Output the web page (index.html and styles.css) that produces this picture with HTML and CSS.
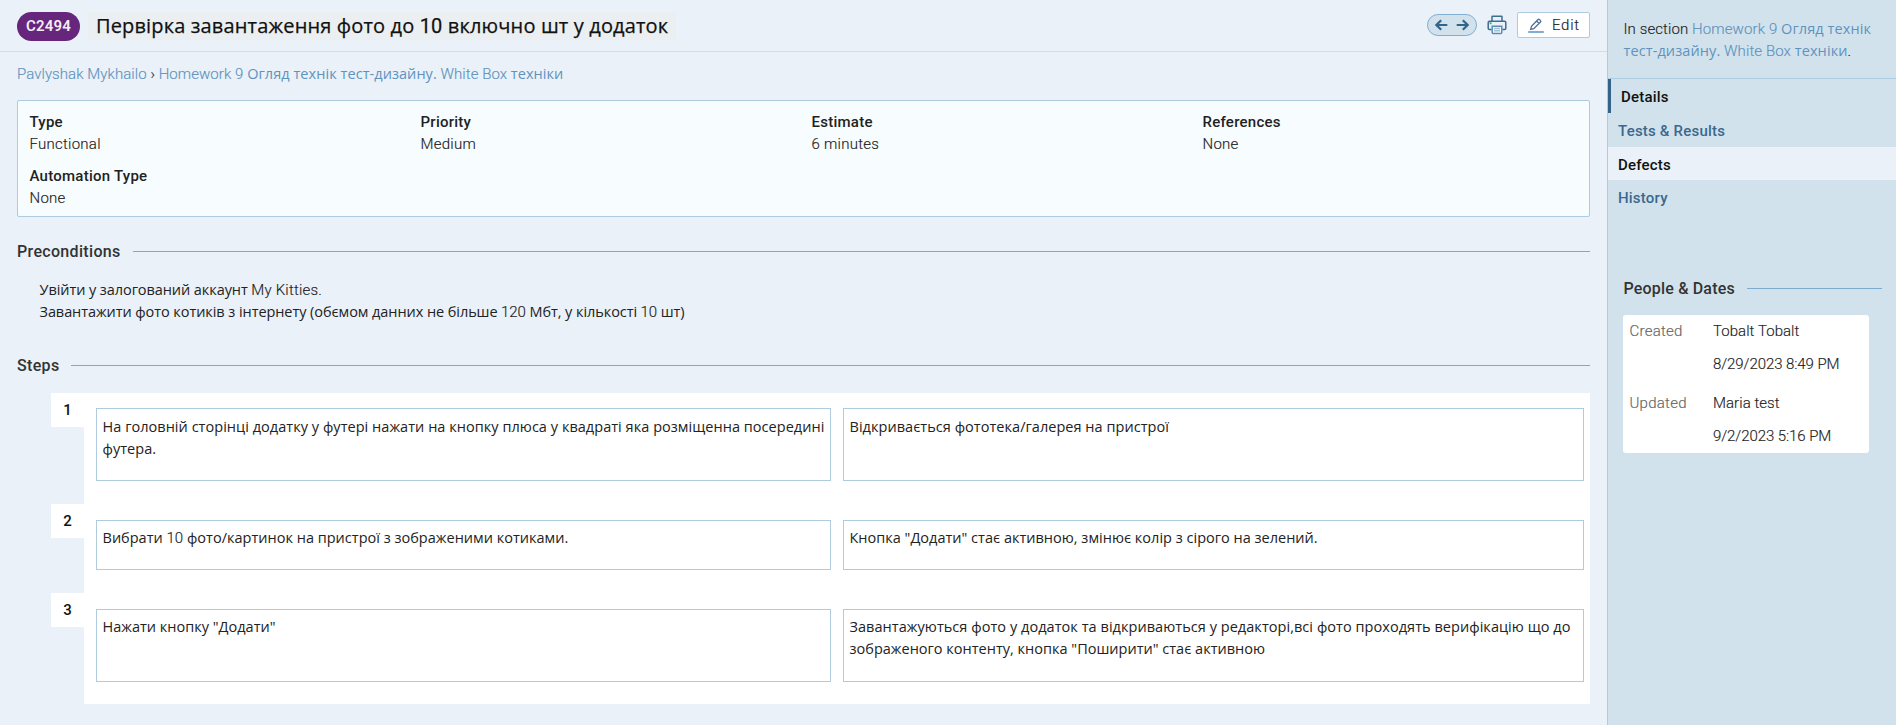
FILE: index.html
```
<!DOCTYPE html>
<html lang="uk">
<head>
<meta charset="utf-8">
<title>C2494</title>
<link rel="stylesheet" href="styles.css">
</head>
<body>
<div class="app">
  <main class="main">
    <header class="header">
      <span class="badge">C2494</span>
      <h1 class="title">Первірка завантаження фото до <span class="title-num">10</span> включно шт у додаток</h1>
      <div class="toolbar">
        <div class="pager">
          <svg width="13" height="12" viewBox="0 0 13 12"><path d="M12.3 6H1.6M6.2 1.2L1.4 6l4.8 4.8"/></svg>
          <svg width="13" height="12" viewBox="0 0 13 12"><path d="M.7 6h10.7M6.8 1.2L11.6 6l-4.8 4.8"/></svg>
        </div>
        <svg class="printer" width="20" height="20" viewBox="0 0 20 20">
          <path class="printer-body" d="M5 6V1.8Q5 1.2 5.6 1.2h8.8q.6 0 .6.6V6M4.6 14.4H2.4Q1.2 14.4 1.2 13.2V7.4Q1.2 6.2 2.4 6.2h15.2q1.2 0 1.2 1.2v5.8q0 1.2-1.2 1.2h-2.2"/>
          <path class="printer-page" d="M5.2 11.2h9.6v6.4q0 1-1 1H6.2q-1 0-1-1z"/>
          <path class="printer-lines" d="M7 13.5h6M7 15.7h6"/>
          <rect class="printer-led" x="2.7" y="7.4" width="1.8" height="1.8"/>
        </svg>
        <button class="edit">
          <svg width="16" height="16" viewBox="0 0 16 16"><path class="pencil" d="M2.7 11.4l.8-3.1L10 1.5q.7-.7 1.4 0l1.1 1.1q.7.7 0 1.4L5.8 10.6zM8.6 3l2.5 2.5"/><path class="pencil-line" d="M.8 14h14.4"/></svg>
          <span>Edit</span>
        </button>
      </div>
    </header>
    <nav class="crumbs"><a class="crumb-name">Pavlyshak Mykhailo</a> <span class="sep">›</span> <a>Homework 9 <span class="cy">Огляд технік тест-дизайну.</span> White Box <span class="cy">техніки</span></a></nav>

    <section class="meta">
      <div><b>Type</b><p>Functional</p></div>
      <div><b>Priority</b><p>Medium</p></div>
      <div><b>Estimate</b><p>6 minutes</p></div>
      <div><b>References</b><p>None</p></div>
      <div><b>Automation Type</b><p>None</p></div>
    </section>

    <h2 class="heading heading-pre">Preconditions</h2>
    <div class="pre">
      <p><span class="cy">Увійти у залогований аккаунт</span> <span class="kitties">My Kitties.</span></p>
      <p><span class="cy">Завантажити фото котиків з інтернету (обємом данних не більше</span> 120 <span class="cy">Мбт, у кількості</span> 10 <span class="cy">шт)</span></p>
    </div>

    <h2 class="heading heading-steps">Steps</h2>
    <div class="steps">
      <div class="step step-tall">
        <div class="num">1</div>
        <div class="cells">
          <div class="cell">На головній сторінці додатку у футері нажати на кнопку плюса у квадраті яка розміщенна посередині футера.</div>
          <div class="cell">Відкривається фототека/галерея на пристрої</div>
        </div>
      </div>
      <div class="step step-short">
        <div class="num">2</div>
        <div class="cells">
          <div class="cell">Вибрати <span class="lat">10</span> фото/картинок на пристрої з зображеними котиками.</div>
          <div class="cell">Кнопка "Додати" стає активною, змінює колір з сірого на зелений.</div>
        </div>
      </div>
      <div class="step step-tall step-last">
        <div class="num">3</div>
        <div class="cells">
          <div class="cell">Нажати кнопку "Додати"</div>
          <div class="cell"><span class="wide">Завантажуються фото у додаток та відкриваються у редакторі,всі фото проходять верифікацію що до</span> зображеного контенту, кнопка "Поширити" стає активною</div>
        </div>
      </div>
    </div>
  </main>

  <aside class="side">
    <p class="section">In section <a>Homework 9 <span class="cy">Огляд технік<br>тест-дизайну.</span> White Box <span class="cy">техніки</span></a>.</p>
    <nav class="tabs">
      <a class="tab current">Details</a>
      <a class="tab">Tests &amp; Results</a>
      <a class="tab hover">Defects</a>
      <a class="tab">History</a>
    </nav>
    <h2 class="heading heading-people">People &amp; Dates</h2>
    <dl class="people">
      <dt>Created</dt><dd>Tobalt Tobalt</dd><dd class="date">8/29/2023 8:49 PM</dd>
      <dt class="second">Updated</dt><dd class="second">Maria test</dd><dd class="date">9/2/2023 5:16 PM</dd>
    </dl>
  </aside>
</div>
</body>
</html>
```

FILE: styles.css
```
* { box-sizing: border-box; }
body, h1, h2, p, dl, dd, dt { margin: 0; }
body {
  background: #eaf1f8;
  color: #222;
  font: 300 15px/22px Roboto, "Open Sans", sans-serif;
  -webkit-text-stroke: .15px currentColor;
}
a { color: #5f93be; }
.app { display: flex; height: 725px; overflow: hidden; }
.main { width: 1607px; flex: none; }
.cy { font-family: "Open Sans", sans-serif; font-size: 14.5px; font-weight: 400; line-height: 1; -webkit-text-stroke: 0; }
.lat { font-family: Roboto, sans-serif; font-size: 15px; font-weight: 300; line-height: 1; -webkit-text-stroke: .15px currentColor; }

.header {
  display: flex;
  align-items: center;
  height: 52px;
  padding: 0 17px;
  border-bottom: 1px solid #cfdfea;
}
.badge {
  width: 63px;
  height: 29px;
  margin-top: 1px;
  border-radius: 15px;
  background: #66267c;
  color: #f3eef6;
  font-size: 15px;
  font-weight: 600;
  line-height: 29px;
  letter-spacing: .2px;
  text-align: center;
  -webkit-text-stroke: 0;
}
.title {
  height: 28px;
  margin: 0 0 0 8px;
  padding: 0 8px;
  background: #ebeff2;
  color: #111;
  font: 500 20px/28px "Open Sans", sans-serif;
  letter-spacing: .15px;
  -webkit-text-stroke: .25px #111;
}
.title-num { font-family: Roboto, sans-serif; font-weight: 400; line-height: 1; }
.toolbar { display: flex; align-items: center; height: 26px; margin: 0 0 2px auto; }
.pager {
  display: flex;
  align-items: center;
  justify-content: space-between;
  width: 50px;
  height: 22px;
  padding: 0 7px;
  border: 1px solid #7fb0d3;
  border-radius: 11px;
  background: #d2e2ec;
}
.pager svg { fill: none; stroke: #33658a; stroke-width: 2.2; }
.printer { margin: 0 10px; fill: none; stroke: #3d6d91; stroke-width: 1.5; }
.printer-page { fill: #f4f8fc; stroke: #5b8db3; }
.printer-lines { stroke: #9dbfda; stroke-width: 1.5; }
.printer-led { fill: #1fa37c; stroke: none; }
.edit {
  display: flex;
  align-items: center;
  gap: 8px;
  width: 73px;
  height: 26px;
  padding: 0 0 0 10px;
  border: 1px solid #aecbe0;
  border-radius: 2px;
  background: #fff;
  color: #222;
  font: 300 15px/22px Roboto, sans-serif;
  letter-spacing: .7px;
}
.edit svg { fill: none; margin-top: 2px; }
.pencil { stroke: #4a6f96; stroke-width: 1.3; }
.pencil-line { stroke: #7fadd2; stroke-width: 1.8; stroke-linecap: round; }

.crumbs { height: 48px; padding: 11px 17px 0; letter-spacing: .06px; }
.sep { color: #333; }

.meta {
  display: grid;
  grid-template-columns: repeat(4, 391px);
  align-content: start;
  row-gap: 10px;
  height: 117px;
  margin: 0 17px;
  padding: 10px 0 0 11.5px;
  border: 1px solid #aecbe0;
  border-radius: 2px;
  background: #f7fcff;
  letter-spacing: .25px;
}
.meta > div { height: 44px; }
.meta b { display: block; font-weight: 500; -webkit-text-stroke: 0; }

.heading {
  display: flex;
  align-items: center;
  gap: 12px;
  height: 22px;
  padding-top: 2px;
  color: #333;
  font-size: 16px;
  font-weight: 500;
  line-height: 20px;
  letter-spacing: .33px;
  -webkit-text-stroke: 0;
}
.heading::after { content: ""; flex: 1; height: 1px; margin-bottom: 2px; background: #7bacd0; }
.heading-pre { margin: 23px 17px 0; }
.pre { padding: 17px 17px 0 39.5px; letter-spacing: -.07px; }
.kitties { letter-spacing: .2px; }
.heading-steps { margin: 31px 17px 17px; }

.steps { margin: 0 17px 0 51px; }
.step { display: flex; }
.num {
  width: 33px;
  height: 34px;
  background: #fff;
  color: #111;
  font-weight: 500;
  line-height: 34px;
  text-align: center;
  -webkit-text-stroke: 0;
}
.cells {
  flex: 1;
  display: grid;
  grid-template-columns: 735px 741px;
  column-gap: 12px;
  padding: 16px 0 23px 12px;
  background: #fff;
}
.cell {
  padding: 6px 4px 0 5.5px;
  border: 1px solid #aecbe0;
  font-family: "Open Sans", sans-serif;
  font-size: 14.5px;
  font-weight: 400;
  line-height: 22px;
  letter-spacing: .01px;
  -webkit-text-stroke: 0;
}
.wide { letter-spacing: .05px; }
.step-tall { height: 111px; }
.step-short { height: 89px; }
.step-tall .cells { padding-bottom: 22px; }
.step:first-child .cells { padding-top: 15px; padding-bottom: 23px; }
.step:first-child .cell { padding-top: 7px; letter-spacing: .04px; }

.side { flex: 1; border-left: 1px solid #aecbe0; background: #d2e2ec; }
.section { height: 79px; padding: 18px 0 0 15.5px; border-bottom: 1px solid #aecbe0; white-space: nowrap; letter-spacing: .1px; }
.tabs { display: flex; flex-direction: column; }
.tab {
  height: 34px;
  padding: 1px 0 0 10px;
  color: #3b688e;
  font-weight: 500;
  line-height: 34px;
  letter-spacing: .2px;
  -webkit-text-stroke: 0;
}
.tab.current { border-left: 3px solid #33658a; color: #111; }
.tab.hover { height: 33px; background: #eaf1f8; color: #111; }
.heading-people { margin: 63px 14px 0 15.5px; letter-spacing: .18px; }
.people {
  display: grid;
  grid-template-columns: 83.5px 1fr;
  align-content: start;
  row-gap: 11px;
  width: 246px;
  height: 138px;
  margin: 16px 0 0 15px;
  padding: 5px 0 0 6.5px;
  border-radius: 3px;
  background: #fff;
}
.people dt { color: #666; letter-spacing: .25px; }
.people dd { grid-column: 2; letter-spacing: .05px; }
.people .date { letter-spacing: -.08px; }
.people .second { margin-top: 6px; }
```
